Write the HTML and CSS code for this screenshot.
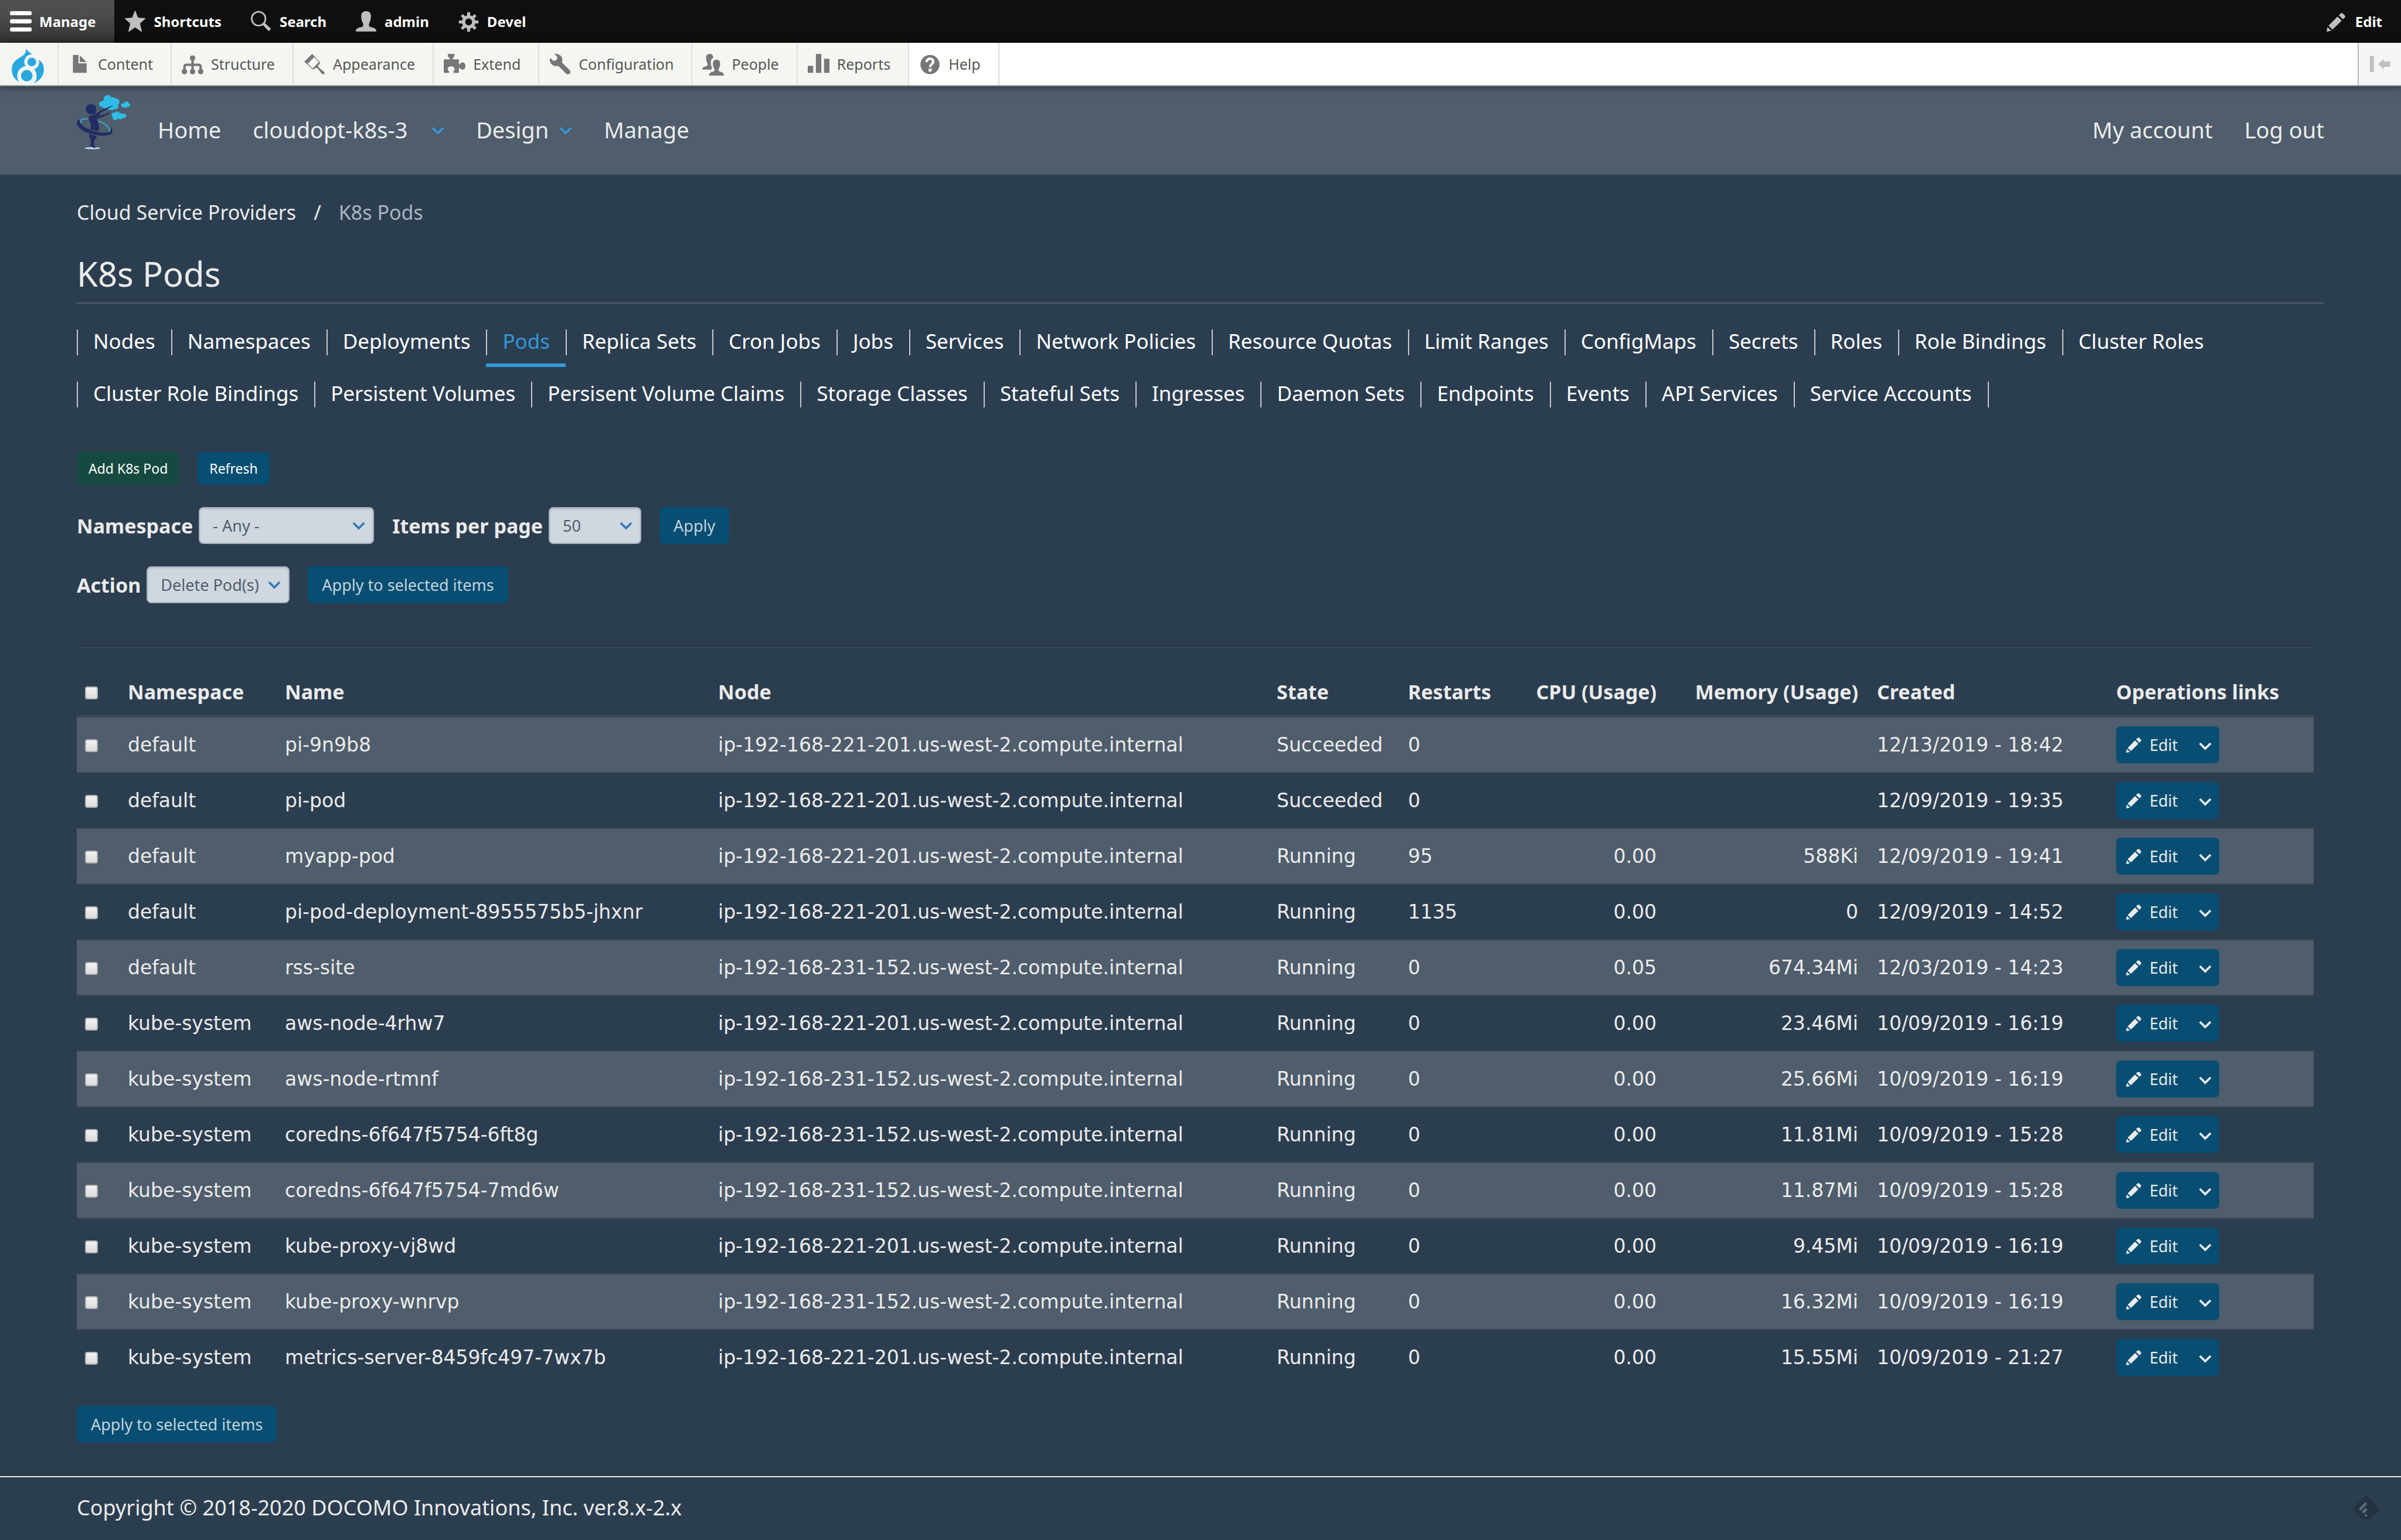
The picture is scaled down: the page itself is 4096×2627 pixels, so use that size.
FILE: index.html
```
<!DOCTYPE html>
<html lang="en">
<head>
    <meta charset="UTF-8">
    <meta name="viewport" content="width=device-width, initial-scale=1.0">
    <title>K8s Pods</title>
    <link rel="stylesheet" href="styles.css">
</head>
<body>

<svg class="sprite" aria-hidden="true">
    <symbol id="pencil" viewBox="0 0 104 104">
        <path d="M0 104 L5 78 L26 99 Z"/>
        <path d="M11 71 L61 20 L84 43 L33 93 Z"/>
        <path d="M68 13 L78 3 Q84 -2 91 4 L100 13 Q106 20 101 26 L91 36 Z"/>
    </symbol>
    <symbol id="chevron" viewBox="0 0 24 16">
        <path d="M2 2 L12 12 L22 2" fill="none" stroke="currentColor" stroke-width="4"/>
    </symbol>
</svg>

<nav class="toolbar-bar">
    <a href="#" class="toolbar-item active">
        <svg class="toolbar-icon" viewBox="0 0 120 120"><rect y="3" width="120" height="23" rx="9"/><rect y="48" width="120" height="23" rx="9"/><rect y="93" width="120" height="23" rx="9"/></svg>
        Manage
    </a>
    <a href="#" class="toolbar-item">
        <svg class="toolbar-icon" viewBox="0 0 120 120"><path d="M60 3 L75 41 L115 44 L85 71 L95 115 L60 91 L25 115 L35 71 L5 44 L45 41 Z" stroke-width="4" stroke="currentColor" stroke-linejoin="round"/></svg>
        Shortcuts
    </a>
    <a href="#" class="toolbar-item">
        <svg class="toolbar-icon" viewBox="0 0 120 120"><circle cx="46" cy="45" r="38" fill="none" stroke="currentColor" stroke-width="9"/><path d="M68 79 L80 68 L115 101 L102 114 Z"/></svg>
        Search
    </a>
    <a href="#" class="toolbar-item">
        <svg class="toolbar-icon" viewBox="0 0 120 120"><path d="M60 3 C80 3 87 15 87 32 C87 50 82 62 77 71 C73 86 77 90 95 93 C108 96 116 104 117 112 Q117 116 113 116 L7 116 Q3 116 3 112 C4 104 12 96 25 93 C43 90 47 86 43 71 C38 62 33 50 33 32 C33 15 40 3 60 3 Z"/></svg>
        admin
    </a>
    <a href="#" class="toolbar-item">
        <svg class="toolbar-icon" viewBox="0 0 120 120"><circle cx="60" cy="63" r="28" fill="none" stroke="currentColor" stroke-width="18"/><g stroke="currentColor" stroke-width="16"><path d="M60 9V30M60 96V117M6 63H27M93 63H114M22 25L37 40M83 86L98 101M98 25L83 40M37 86L22 101"/></g></svg>
        Devel
    </a>
    <a href="#" class="toolbar-item toolbar-edit">
        <svg class="toolbar-icon edit-icon"><use href="#pencil"/></svg>
        Edit
    </a>
</nav>

<nav class="toolbar-tray">
    <a href="#" class="tray-home" aria-label="Home">
        <svg class="drop" viewBox="0 0 178 198">
            <path d="M79 0 C83 14 100 25 116 37 C145 60 178 75 178 118 C178 155 155 182 117 198 C137 182 137 172 137 154 C137 139 131 129 123 119 C141 110 151 98 151 77 C151 71 150 69 149 67 C120 38 105 35 116 37 C92 38 70 55 70 76 C70 89 74 95 79 101 C50 104 31 126 31 154 C31 170 35 180 43 188 C15 175 0 150 0 118 C0 80 27 62 54 46 C75 34 80 20 79 0 Z"/>
            <circle class="drop-gap" cx="111" cy="76" r="41"/>
            <circle class="drop-gap" cx="84" cy="153" r="53"/>
            <path class="drop-gap" d="M43 187 L84 199 L118 198 L125 170 L50 160 Z"/>
            <circle cx="111" cy="77" r="24"/>
            <circle cx="83" cy="153" r="32"/>
        </svg>
    </a>
    <a href="#" class="tray-item">
        <svg class="toolbar-icon" viewBox="0 0 120 120"><path d="M26 9 H52 Q55 9 55 12 V55 H98 Q100 55 100 58 V106 Q100 108 98 108 H26 Q24 108 24 106 V11 Q24 9 26 9 Z M62 11 L99 48 H64 Q62 48 62 46 Z"/></svg>
        Content
    </a>
    <a href="#" class="tray-item">
        <svg class="toolbar-icon" viewBox="0 0 120 120"><circle cx="60" cy="26" r="15"/><circle cx="15" cy="101" r="15"/><circle cx="60" cy="101" r="15"/><circle cx="105" cy="101" r="15"/><path d="M60 26V101M15 101V75Q15 63 27 63H93Q105 63 105 75V101" fill="none" stroke="currentColor" stroke-width="13"/></svg>
        Structure
    </a>
    <a href="#" class="tray-item">
        <svg class="toolbar-icon" viewBox="0 0 120 120"><path d="M47 3 L3 46 L20 60 L62 18 Z"/><path d="M21 59 L51 86 L86 48 L60 20" fill="none" stroke="currentColor" stroke-width="4"/><path d="M50 88 L88 46 L90 56 Q88 62 80 66 L81 76 L112 101 Q119 108 113 114 Q107 119 100 112 L75 81 L65 80 Q60 89 50 88 Z"/></svg>
        Appearance
    </a>
    <a href="#" class="tray-item">
        <svg class="toolbar-icon" viewBox="0 0 120 120"><path d="M0 36 Q0 33 3 33 H34 V29 C26 22 22 14 22 6 Q22 3 25 3 H57 Q60 3 60 6 C60 14 56 22 49 29 V33 H81 Q84 33 84 36 V61 H88 C92 52 99 50 105 50 C114 50 120 58 120 70 C120 82 114 90 105 90 C99 90 92 86 88 80 H84 V105 Q84 108 81 108 H55 L52 102 C58 96 60 93 60 86 C60 77 51 72 41 72 C31 72 22 77 22 86 C22 93 25 96 31 102 L28 108 H3 Q0 108 0 105 Z"/></svg>
        Extend
    </a>
    <a href="#" class="tray-item">
        <svg class="toolbar-icon" viewBox="0 0 120 120"><path d="M29 3 C50 0 73 14 73 36 Q73 44 70 50 L112 92 C124 103 115 116 103 116 Q97 116 92 111 L49 69 C30 74 6 68 3 36 L6 25 L20 40 Q30 44 38 38 Q47 30 43 18 Z"/></svg>
        Configuration
    </a>
    <a href="#" class="tray-item">
        <svg class="toolbar-icon" viewBox="0 0 120 120"><path d="M41 3 C54 3 61 11 61 24 C50 30 46 42 48 58 C48 66 52 72 54 80 L48 90 H3 Q0 90 0 87 C1 80 7 75 18 72 C29 69 32 65 29 55 C24 48 21 38 21 24 C21 11 28 3 41 3 Z"/><path d="M79 35 C92 35 99 43 99 56 C99 70 96 79 91 86 C88 97 92 100 103 103 C114 106 120 112 120 120 Q120 123 117 123 H41 Q38 123 38 120 C38 112 44 106 55 103 C66 100 70 97 67 86 C62 79 59 70 59 56 C59 43 66 35 79 35 Z"/></svg>
        People
    </a>
    <a href="#" class="tray-item">
        <svg class="toolbar-icon" viewBox="0 0 120 120"><rect y="69" width="30" height="39" rx="3"/><rect x="45" y="3" width="30" height="105" rx="3"/><rect x="90" y="30" width="30" height="78" rx="3"/></svg>
        Reports
    </a>
    <a href="#" class="tray-item tray-help">
        <svg class="toolbar-icon" viewBox="0 0 120 120"><circle cx="60" cy="62" r="53"/><path d="M42 48 C42 24 78 24 78 46 C78 60 61 60 61 76" fill="none" stroke="#fff" stroke-width="14"/><rect x="52" y="84" width="18" height="17" rx="4" fill="#fff"/></svg>
        Help
    </a>
    <button type="button" class="tray-toggle" aria-label="Vertical orientation">
        <svg class="toggle-icon" viewBox="0 0 114 90"><rect width="22" height="90" rx="3"/><path d="M46 46 L76 17 V31 H110 Q113 31 113 34 V58 Q113 61 110 61 H76 V75 Z"/></svg>
    </button>
</nav>

<header class="site-header">
    <a href="#" class="logo" aria-label="Cloud Orchestrator">
        <svg class="logo-image" viewBox="0 0 294 300">
            <ellipse cx="86" cy="293" rx="44" ry="6" fill="#bfdcf2"/>
            <g fill="#2fbce6">
                <circle cx="170" cy="22" r="22"/><circle cx="198" cy="32" r="20"/><circle cx="215" cy="38" r="20"/><circle cx="139" cy="50" r="16"/><circle cx="165" cy="50" r="28"/><circle cx="190" cy="58" r="26"/><circle cx="212" cy="62" r="17"/>
                <circle cx="255" cy="57" r="11"/><circle cx="273" cy="49" r="13"/><circle cx="284" cy="55" r="10"/><circle cx="267" cy="60" r="11"/>
                <circle cx="206" cy="110" r="14"/><circle cx="223" cy="106" r="15"/><circle cx="212" cy="124" r="15"/><circle cx="240" cy="117" r="17"/><circle cx="260" cy="114" r="12"/>
            </g>
            <path d="M24 155 C14 135 36 128 60 132 M122 143 C155 156 180 178 182 196 Q182 202 176 203" fill="none" stroke="#35b4dc" stroke-width="6"/>
            <path d="M15 134 C-14 150 2 180 45 202 C90 225 160 230 185 216 C202 206 199 192 186 175 C192 198 183 207 155 208 C100 208 40 182 22 158 Q14 144 15 134 Z" fill="#202d63"/>
            <g fill="#202d63">
                <path d="M50 80 C50 60 62 51 80 51 C100 51 110 64 105 76 L109 88 L105 92 C106 104 100 108 88 106 C68 108 52 100 50 80 Z"/>
                <path d="M67 115 L100 109 L122 91 L130 99 L121 115 L148 107 L154 117 L112 131 Q109 138 114 147 Q122 160 123 178 L119 199 L74 188 C76 178 82 168 77 158 Q64 138 67 115 Z"/>
                <path d="M124 90 L140 81 L196 58 L197 61 L143 91 L130 98 Z"/>
                <path d="M153 107 L172 96 L178 98 L178 104 L158 115 Z"/>
                <path d="M67 216 L109 227 Q110 243 97 247 Q93 262 94 274 L104 288 Q102 294 96 292 L74 281 Q71 276 78 268 L77 246 Q67 232 67 216 Z"/>
            </g>
        </svg>
    </a>
    <nav class="main-nav">
        <a href="#">Home</a>
        <a href="#" class="nav-cluster">cloudopt-k8s-3 <svg class="chevron nav-chevron"><use href="#chevron"/></svg></a>
        <a href="#">Design <svg class="chevron nav-chevron"><use href="#chevron"/></svg></a>
        <a href="#">Manage</a>
    </nav>
    <nav class="main-nav account-nav">
        <a href="#">My account</a>
        <a href="#">Log out</a>
    </nav>
</header>

<main class="content">
    <nav class="breadcrumb"><a href="#">Cloud Service Providers</a><span>/</span><span class="current">K8s Pods</span></nav>

    <h1>K8s Pods</h1>

    <ul class="tabs">
        <li><a href="#">Nodes</a></li>
        <li><a href="#">Namespaces</a></li>
        <li><a href="#">Deployments</a></li>
        <li class="active"><a href="#">Pods</a></li>
        <li><a href="#">Replica Sets</a></li>
        <li><a href="#">Cron Jobs</a></li>
        <li><a href="#">Jobs</a></li>
        <li><a href="#">Services</a></li>
        <li><a href="#">Network Policies</a></li>
        <li><a href="#">Resource Quotas</a></li>
        <li><a href="#">Limit Ranges</a></li>
        <li><a href="#">ConfigMaps</a></li>
        <li><a href="#">Secrets</a></li>
        <li><a href="#">Roles</a></li>
        <li><a href="#">Role Bindings</a></li>
        <li><a href="#">Cluster Roles</a></li>
        <li><a href="#">Cluster Role Bindings</a></li>
        <li><a href="#">Persistent Volumes</a></li>
        <li><a href="#">Persisent Volume Claims</a></li>
        <li><a href="#">Storage Classes</a></li>
        <li><a href="#">Stateful Sets</a></li>
        <li><a href="#">Ingresses</a></li>
        <li><a href="#">Daemon Sets</a></li>
        <li><a href="#">Endpoints</a></li>
        <li><a href="#">Events</a></li>
        <li><a href="#">API Services</a></li>
        <li><a href="#">Service Accounts</a></li>
    </ul>

    <div class="actions">
        <a href="#" class="btn btn-small btn-add">Add K8s Pod</a>
        <a href="#" class="btn btn-small">Refresh</a>
    </div>

    <form class="filters">
        <div class="field">
            <label for="namespace">Namespace</label>
            <div class="select-wrap">
                <select id="namespace" class="select-namespace"><option>- Any -</option></select>
                <svg class="chevron"><use href="#chevron"/></svg>
            </div>
        </div>
        <div class="field">
            <label for="items">Items per page</label>
            <div class="select-wrap">
                <select id="items" class="select-items"><option>50</option></select>
                <svg class="chevron"><use href="#chevron"/></svg>
            </div>
        </div>
        <button type="button" class="btn">Apply</button>
    </form>

    <form class="bulk">
        <div class="filters">
            <div class="field">
                <label for="action">Action</label>
                <div class="select-wrap">
                    <select id="action" class="select-action"><option>Delete Pod(s)</option></select>
                    <svg class="chevron"><use href="#chevron"/></svg>
                </div>
            </div>
            <button type="button" class="btn">Apply to selected items</button>
        </div>

        <table class="pods">
            <thead>
                <tr>
                    <th class="col-check"><input type="checkbox" aria-label="Select all rows"></th>
                    <th class="col-namespace">Namespace</th>
                    <th class="col-name">Name</th>
                    <th class="col-node">Node</th>
                    <th class="col-state">State</th>
                    <th class="col-restarts">Restarts</th>
                    <th class="col-cpu num">CPU (Usage)</th>
                    <th class="col-memory num">Memory (Usage)</th>
                    <th class="col-created">Created</th>
                    <th>Operations links</th>
                </tr>
            </thead>
            <tbody>
                <tr>
                    <td><input type="checkbox" aria-label="Select pi-9n9b8"></td>
                    <td>default</td><td>pi-9n9b8</td><td>ip-192-168-221-201.us-west-2.compute.internal</td><td>Succeeded</td><td>0</td><td class="num"></td><td class="num"></td><td>12/13/2019 - 18:42</td>
                    <td><div class="ops"><a href="#"><svg class="ops-pencil"><use href="#pencil"/></svg>Edit</a><button type="button" aria-label="More"><svg class="chevron"><use href="#chevron"/></svg></button></div></td>
                </tr>
                <tr>
                    <td><input type="checkbox" aria-label="Select pi-pod"></td>
                    <td>default</td><td>pi-pod</td><td>ip-192-168-221-201.us-west-2.compute.internal</td><td>Succeeded</td><td>0</td><td class="num"></td><td class="num"></td><td>12/09/2019 - 19:35</td>
                    <td><div class="ops"><a href="#"><svg class="ops-pencil"><use href="#pencil"/></svg>Edit</a><button type="button" aria-label="More"><svg class="chevron"><use href="#chevron"/></svg></button></div></td>
                </tr>
                <tr>
                    <td><input type="checkbox" aria-label="Select myapp-pod"></td>
                    <td>default</td><td>myapp-pod</td><td>ip-192-168-221-201.us-west-2.compute.internal</td><td>Running</td><td>95</td><td class="num">0.00</td><td class="num">588Ki</td><td>12/09/2019 - 19:41</td>
                    <td><div class="ops"><a href="#"><svg class="ops-pencil"><use href="#pencil"/></svg>Edit</a><button type="button" aria-label="More"><svg class="chevron"><use href="#chevron"/></svg></button></div></td>
                </tr>
                <tr>
                    <td><input type="checkbox" aria-label="Select pi-pod-deployment-8955575b5-jhxnr"></td>
                    <td>default</td><td>pi-pod-deployment-8955575b5-jhxnr</td><td>ip-192-168-221-201.us-west-2.compute.internal</td><td>Running</td><td>1135</td><td class="num">0.00</td><td class="num">0</td><td>12/09/2019 - 14:52</td>
                    <td><div class="ops"><a href="#"><svg class="ops-pencil"><use href="#pencil"/></svg>Edit</a><button type="button" aria-label="More"><svg class="chevron"><use href="#chevron"/></svg></button></div></td>
                </tr>
                <tr>
                    <td><input type="checkbox" aria-label="Select rss-site"></td>
                    <td>default</td><td>rss-site</td><td>ip-192-168-231-152.us-west-2.compute.internal</td><td>Running</td><td>0</td><td class="num">0.05</td><td class="num">674.34Mi</td><td>12/03/2019 - 14:23</td>
                    <td><div class="ops"><a href="#"><svg class="ops-pencil"><use href="#pencil"/></svg>Edit</a><button type="button" aria-label="More"><svg class="chevron"><use href="#chevron"/></svg></button></div></td>
                </tr>
                <tr>
                    <td><input type="checkbox" aria-label="Select aws-node-4rhw7"></td>
                    <td>kube-system</td><td>aws-node-4rhw7</td><td>ip-192-168-221-201.us-west-2.compute.internal</td><td>Running</td><td>0</td><td class="num">0.00</td><td class="num">23.46Mi</td><td>10/09/2019 - 16:19</td>
                    <td><div class="ops"><a href="#"><svg class="ops-pencil"><use href="#pencil"/></svg>Edit</a><button type="button" aria-label="More"><svg class="chevron"><use href="#chevron"/></svg></button></div></td>
                </tr>
                <tr>
                    <td><input type="checkbox" aria-label="Select aws-node-rtmnf"></td>
                    <td>kube-system</td><td>aws-node-rtmnf</td><td>ip-192-168-231-152.us-west-2.compute.internal</td><td>Running</td><td>0</td><td class="num">0.00</td><td class="num">25.66Mi</td><td>10/09/2019 - 16:19</td>
                    <td><div class="ops"><a href="#"><svg class="ops-pencil"><use href="#pencil"/></svg>Edit</a><button type="button" aria-label="More"><svg class="chevron"><use href="#chevron"/></svg></button></div></td>
                </tr>
                <tr>
                    <td><input type="checkbox" aria-label="Select coredns-6f647f5754-6ft8g"></td>
                    <td>kube-system</td><td>coredns-6f647f5754-6ft8g</td><td>ip-192-168-231-152.us-west-2.compute.internal</td><td>Running</td><td>0</td><td class="num">0.00</td><td class="num">11.81Mi</td><td>10/09/2019 - 15:28</td>
                    <td><div class="ops"><a href="#"><svg class="ops-pencil"><use href="#pencil"/></svg>Edit</a><button type="button" aria-label="More"><svg class="chevron"><use href="#chevron"/></svg></button></div></td>
                </tr>
                <tr>
                    <td><input type="checkbox" aria-label="Select coredns-6f647f5754-7md6w"></td>
                    <td>kube-system</td><td>coredns-6f647f5754-7md6w</td><td>ip-192-168-231-152.us-west-2.compute.internal</td><td>Running</td><td>0</td><td class="num">0.00</td><td class="num">11.87Mi</td><td>10/09/2019 - 15:28</td>
                    <td><div class="ops"><a href="#"><svg class="ops-pencil"><use href="#pencil"/></svg>Edit</a><button type="button" aria-label="More"><svg class="chevron"><use href="#chevron"/></svg></button></div></td>
                </tr>
                <tr>
                    <td><input type="checkbox" aria-label="Select kube-proxy-vj8wd"></td>
                    <td>kube-system</td><td>kube-proxy-vj8wd</td><td>ip-192-168-221-201.us-west-2.compute.internal</td><td>Running</td><td>0</td><td class="num">0.00</td><td class="num">9.45Mi</td><td>10/09/2019 - 16:19</td>
                    <td><div class="ops"><a href="#"><svg class="ops-pencil"><use href="#pencil"/></svg>Edit</a><button type="button" aria-label="More"><svg class="chevron"><use href="#chevron"/></svg></button></div></td>
                </tr>
                <tr>
                    <td><input type="checkbox" aria-label="Select kube-proxy-wnrvp"></td>
                    <td>kube-system</td><td>kube-proxy-wnrvp</td><td>ip-192-168-231-152.us-west-2.compute.internal</td><td>Running</td><td>0</td><td class="num">0.00</td><td class="num">16.32Mi</td><td>10/09/2019 - 16:19</td>
                    <td><div class="ops"><a href="#"><svg class="ops-pencil"><use href="#pencil"/></svg>Edit</a><button type="button" aria-label="More"><svg class="chevron"><use href="#chevron"/></svg></button></div></td>
                </tr>
                <tr>
                    <td><input type="checkbox" aria-label="Select metrics-server-8459fc497-7wx7b"></td>
                    <td>kube-system</td><td>metrics-server-8459fc497-7wx7b</td><td>ip-192-168-221-201.us-west-2.compute.internal</td><td>Running</td><td>0</td><td class="num">0.00</td><td class="num">15.55Mi</td><td>10/09/2019 - 21:27</td>
                    <td><div class="ops"><a href="#"><svg class="ops-pencil"><use href="#pencil"/></svg>Edit</a><button type="button" aria-label="More"><svg class="chevron"><use href="#chevron"/></svg></button></div></td>
                </tr>
            </tbody>
        </table>

        <button type="button" class="btn">Apply to selected items</button>
    </form>
</main>

<footer class="site-footer">
    Copyright © 2018-2020 DOCOMO Innovations, Inc. ver.8.x-2.x
    <svg class="feed-badge" viewBox="0 0 146 128">
        <path d="M60 6 Q73 -6 86 6 L140 60 Q151 72 140 84 L104 120 Q96 128 88 128 H58 Q50 128 42 120 L6 84 Q-5 72 6 60 Z" fill="#233342"/>
        <path d="M37 75 L74 38 M54 91 L75 71 M68 110 L76 102" fill="none" stroke="#5a6b7b" stroke-width="15"/>
    </svg>
</footer>

</body>
</html>
```

FILE: styles.css
```
* {
    box-sizing: border-box;
}
body {
    margin: 0;
    background: #2b3e50;
    color: #ebebeb;
    font-family: "Noto Sans", "Open Sans", sans-serif;
    font-size: 34px;
    position: relative;
}
a {
    color: inherit;
    text-decoration: none;
}
svg {
    fill: currentColor;
    flex: none;
    overflow: visible;
}
.sprite {
    position: absolute;
    width: 0;
    height: 0;
}

/* admin toolbar */
.toolbar-bar {
    display: flex;
    height: 73px;
    background: #0f0f0f;
    color: #fff;
    font-size: 24px;
    font-weight: bold;
}
.toolbar-item,
.tray-item {
    display: flex;
    align-items: center;
    gap: 13px;
    padding: 0 32px 0 17px;
}
.toolbar-item.active {
    background: linear-gradient(#4e4e4e 30%, #333);
}
.toolbar-icon {
    width: 37px;
    height: 37px;
    color: #bfbfbf;
}
.toolbar-item.active .toolbar-icon {
    color: #fff;
}
.toolbar-edit {
    margin-left: auto;
}
.toolbar-bar .edit-icon {
    width: 32px;
    height: 32px;
    margin: 3px 4px 0 0;
}
.toolbar-tray {
    position: relative;
    display: flex;
    height: 74px;
    background: #fff;
    border-bottom: 2px solid #a6a6a6;
    box-shadow: 0 0 12px rgba(0, 0, 0, 0.6);
    color: #565656;
    font-size: 25px;
}
.tray-home {
    display: flex;
    align-items: center;
    width: 100px;
    padding: 6px 0 0 20px;
    background: #f5f6f1;
    border-right: 2px solid #ddd;
}
.drop {
    width: 55px;
    height: 61px;
    color: #29a8e0;
}
.drop-gap {
    fill: #f5f6f1;
}
.tray-item {
    padding-right: 30px;
    background: #f5f6f1;
    border-right: 2px solid #ddd;
}
.tray-item .toolbar-icon {
    color: #777;
}
.tray-help {
    background: #fff;
}
.tray-toggle {
    display: flex;
    align-items: center;
    justify-content: center;
    width: 74px;
    margin-left: auto;
    background: #f5f5f5;
    border: 0;
    border-left: 2px solid #bbb;
}
.toggle-icon {
    width: 35px;
    height: 28px;
    color: #bfbfbf;
}

/* site header */
.site-header {
    display: flex;
    align-items: center;
    height: 151px;
    padding: 0 131px 4px;
    background: #4f5d6c;
    font-size: 38px;
}
.logo {
    display: flex;
    margin: 0 47px 24px 0;
}
.logo-image {
    width: 91px;
    height: 93px;
}
.main-nav {
    display: flex;
    gap: 54px;
}
.main-nav a {
    display: flex;
    align-items: center;
    gap: 18px;
}
.main-nav .nav-cluster {
    min-width: 327px;
    justify-content: space-between;
}
.account-nav {
    margin-left: auto;
}
.chevron {
    width: 22px;
    height: 15px;
}
.nav-chevron {
    margin-top: 5px;
    color: #3498db;
}

.content {
    padding: 40px 131px 57px;
}
.breadcrumb {
    display: flex;
    gap: 30px;
    line-height: 48px;
}
.breadcrumb .current {
    color: #abb6c2;
}
h1 {
    margin: 41px 0 44px;
    padding-bottom: 9px;
    border-bottom: 2px solid #4f5d6c;
    font-size: 58px;
    font-weight: normal;
    line-height: 80px;
}
.tabs {
    display: flex;
    flex-wrap: wrap;
    row-gap: 45px;
    margin: 0 0 76px;
    padding: 0;
    list-style: none;
    color: #fff;
    font-size: 35px;
}
.tabs li {
    position: relative;
    padding: 0 27px 4px 26px;
    border-left: 2px solid #c4c9ce;
    line-height: 40px;
}
.tabs li:last-child {
    border-right: 2px solid #c4c9ce;
}
.tabs .active {
    color: #3498db;
}
.tabs .active::after {
    content: "";
    position: absolute;
    left: -2px;
    right: 0;
    top: 58px;
    height: 6px;
    background: #3498db;
}

/* buttons and filters */
.btn {
    display: inline-flex;
    align-items: center;
    height: 63px;
    padding: 0 24px;
    background: #074e72;
    border: 0;
    border-radius: 8px;
    color: #c3d3dc;
    font-family: inherit;
    font-size: 27px;
}
.btn-small {
    height: 56px;
    padding: 0 20px;
    color: #fff;
    font-size: 23px;
}
.btn-add {
    background: #164a41;
}
.actions,
.filters {
    display: flex;
    gap: 31px;
    margin-bottom: 38px;
}
.field {
    display: flex;
    align-items: center;
    gap: 10px;
    font-weight: bold;
}
.select-wrap {
    position: relative;
}
.select-wrap select {
    display: block;
    appearance: none;
    height: 63px;
    padding: 0 22px;
    background: #d0d7df;
    border: 2px solid #a3b0bf;
    border-radius: 8px;
    box-shadow: inset 0 2px 3px rgba(0, 0, 0, 0.1);
    color: #4f5d6c;
    font-family: inherit;
    font-size: 27px;
}
.select-wrap .chevron {
    position: absolute;
    top: 25px;
    right: 15px;
    color: #337ab7;
    pointer-events: none;
}
.select-wrap .select-namespace {
    width: 299px;
}
.select-wrap .select-items {
    width: 158px;
}
.select-wrap .select-action {
    width: 244px;
}

/* pods table */
.bulk .filters {
    margin-bottom: 75px;
}
.pods {
    width: calc(100% - 18px);
    margin-bottom: 36px;
    border-collapse: separate;
    border-spacing: 0;
    table-layout: fixed;
    white-space: nowrap;
}
.pods th {
    padding: 54px 16px 20px;
    border-top: 2px solid #3e4852;
    border-bottom: 2px solid #3e4852;
    line-height: 40px;
    text-align: left;
}
.pods td {
    height: 95px;
    padding: 0 16px;
    border-top: 2px solid #3e4852;
    font-family: "DejaVu Sans", sans-serif;
    font-size: 33px;
}
.pods tbody tr:nth-child(odd) {
    background: #4f5d6c;
}
.pods .num {
    text-align: right;
}
.col-check {
    width: 71px;
}
.col-namespace {
    width: 268px;
}
.col-name {
    width: 739px;
}
.col-node {
    width: 953px;
}
.col-state {
    width: 224px;
}
.col-restarts {
    width: 198px;
}
.col-cpu {
    width: 258px;
}
.col-memory {
    width: 344px;
}
.col-created {
    width: 408px;
}
.pods th:first-child,
.pods td:first-child {
    padding-left: 14px;
}
.pods input {
    display: block;
    appearance: none;
    width: 22px;
    height: 22px;
    margin: 3px 0 0;
    background: linear-gradient(#f2f2f2, #dcdcdc);
    border: 2px solid #b3b3b3;
    border-radius: 4px;
}
.ops {
    display: flex;
    justify-content: space-between;
    width: 176px;
    height: 63px;
    background: #074e72;
    border-radius: 8px;
    font-family: "Noto Sans", sans-serif;
    font-size: 27px;
}
.ops a {
    display: flex;
    align-items: center;
    gap: 14px;
    padding-left: 17px;
}
.ops-pencil {
    width: 26px;
    height: 26px;
}
.ops button {
    padding: 8px 13px 0;
    background: none;
    border: 0;
    color: inherit;
}

.site-footer {
    position: relative;
    padding: 28px 131px 32px;
    border-top: 2px solid #ebebeb;
    font-size: 36px;
    line-height: 48px;
}
.feed-badge {
    position: absolute;
    top: 32px;
    right: 37px;
    width: 45px;
    height: 40px;
}
```
